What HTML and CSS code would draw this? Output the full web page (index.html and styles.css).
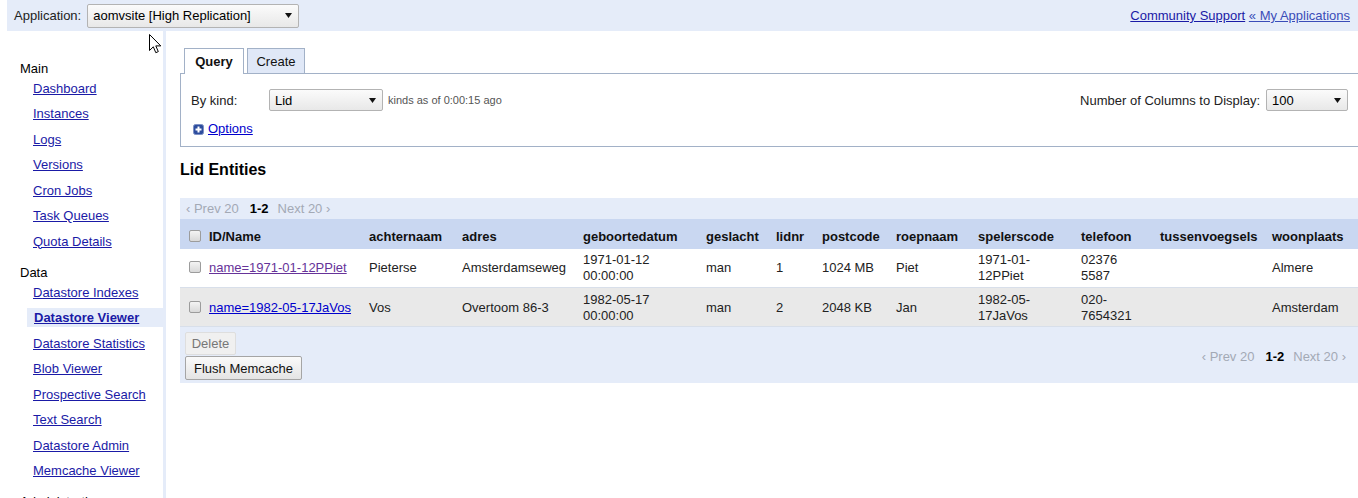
FILE: index.html
```html
<!DOCTYPE html>
<html>
<head>
<meta charset="utf-8">
<title>Datastore Viewer</title>
<link rel="stylesheet" href="styles.css">
</head>
<body>
<div class="topbar">
  <div class="app">
    <span class="app-label">Application:</span>
    <div class="select app-select"><span>aomvsite [High Replication]</span><svg class="arrow" width="7" height="5" viewBox="0 0 7 5"><path d="M0 0H7L3.5 5Z"/></svg></div>
  </div>
  <div class="toplinks"><a href="#" class="tl1">Community Support</a> <a href="#" class="tl2">« My Applications</a></div>
</div>
<div class="layout">
  <nav class="sidebar">
    <div class="sec">Main</div>
    <ul>
      <li><a href="#">Dashboard</a></li>
      <li><a href="#">Instances</a></li>
      <li><a href="#">Logs</a></li>
      <li><a href="#">Versions</a></li>
      <li><a href="#">Cron Jobs</a></li>
      <li><a href="#">Task Queues</a></li>
      <li><a href="#">Quota Details</a></li>
    </ul>
    <div class="sec">Data</div>
    <ul>
      <li><a href="#">Datastore Indexes</a></li>
      <li class="current"><a href="#">Datastore Viewer</a></li>
      <li><a href="#">Datastore Statistics</a></li>
      <li><a href="#">Blob Viewer</a></li>
      <li><a href="#">Prospective Search</a></li>
      <li><a href="#">Text Search</a></li>
      <li><a href="#">Datastore Admin</a></li>
      <li><a href="#">Memcache Viewer</a></li>
    </ul>
    <div class="sec">Administration</div>
    <ul>
      <li><a href="#">Application Settings</a></li>
    </ul>
  </nav>
  <main class="main">
    <div class="tabs">
      <span class="tab active">Query</span>
      <span class="tab create">Create</span>
    </div>
    <div class="tabbox">
      <div class="kindrow">
        <div class="kind">
          <span class="bykind">By kind:</span>
          <div class="select kind-select"><span>Lid</span><svg class="arrow" width="7" height="5" viewBox="0 0 7 5"><path d="M0 0H7L3.5 5Z"/></svg></div>
          <span class="note">kinds as of 0:00:15 ago</span>
        </div>
        <div class="cols">
          <span>Number of Columns to Display:</span>
          <div class="select cols-select"><span>100</span><svg class="arrow" width="7" height="5" viewBox="0 0 7 5"><path d="M0 0H7L3.5 5Z"/></svg></div>
        </div>
      </div>
      <div class="options">
        <svg class="plus" width="11" height="11" viewBox="0 0 11 11"><rect x="0.5" y="0.5" width="10" height="10" rx="2" fill="#2d4d9e" stroke="#7d90c4"/><path d="M5.5 2.5V8.5M2.5 5.5H8.5" stroke="#fff" stroke-width="2"/></svg>
        <a href="#">Options</a>
      </div>
    </div>

    <h2 class="title">Lid Entities</h2>

    <div class="entities">
      <div class="pager"><span class="dis">‹ Prev 20</span><b>1-2</b><span class="dis">Next 20 ›</span></div>
      <table class="grid">
        <colgroup>
          <col class="c1"><col class="c2"><col class="c3"><col class="c4"><col class="c5"><col class="c6"><col class="c7"><col class="c8"><col class="c9"><col class="c10"><col class="c11"><col class="c12">
        </colgroup>
        <thead>
          <tr>
            <th class="first"><span class="cb"></span>ID/Name</th>
            <th>achternaam</th>
            <th>adres</th>
            <th>geboortedatum</th>
            <th>geslacht</th>
            <th>lidnr</th>
            <th>postcode</th>
            <th>roepnaam</th>
            <th>spelerscode</th>
            <th>telefoon</th>
            <th>tussenvoegsels</th>
            <th>woonplaats</th>
          </tr>
        </thead>
        <tbody>
          <tr class="odd">
            <td class="first"><span class="cb"></span><a href="#" class="visited">name=1971-01-12PPiet</a></td>
            <td>Pieterse</td>
            <td>Amsterdamseweg</td>
            <td>1971-01-12 00:00:00</td>
            <td>man</td>
            <td>1</td>
            <td>1024 MB</td>
            <td>Piet</td>
            <td>1971-01-12PPiet</td>
            <td>02376 5587</td>
            <td></td>
            <td>Almere</td>
          </tr>
          <tr class="even">
            <td class="first"><span class="cb"></span><a href="#">name=1982-05-17JaVos</a></td>
            <td>Vos</td>
            <td>Overtoom 86-3</td>
            <td>1982-05-17 00:00:00</td>
            <td>man</td>
            <td>2</td>
            <td>2048 KB</td>
            <td>Jan</td>
            <td>1982-05-17JaVos</td>
            <td>020-7654321</td>
            <td></td>
            <td>Amsterdam</td>
          </tr>
        </tbody>
      </table>
      <div class="foot">
        <div class="btns">
          <button class="btn del" disabled>Delete</button>
          <button class="btn flush">Flush Memcache</button>
        </div>
        <div class="pager right"><span class="dis">‹ Prev 20</span><b>1-2</b><span class="dis">Next 20 ›</span></div>
      </div>
    </div>
  </main>
</div>
<svg class="cursor" width="13" height="21" viewBox="0 0 13 21"><path d="M0.5 0.5V16.5L4.3 12.8L6.8 18.7L9.3 17.6L6.8 11.9H11.8Z" fill="#fff" stroke="#000" stroke-width="1" stroke-linejoin="miter"/></svg>
</body>
</html>
```
FILE: styles.css
```css
html, body {
  margin: 0;
  padding: 0;
  overflow: hidden;
}
body {
  font-family: "Liberation Sans", Arial, sans-serif;
  font-size: 13px;
  color: #000;
  background: #fff;
  width: 1358px;
  height: 498px;
  position: relative;
}
a {
  color: #0000cc;
  text-decoration: underline;
}

/* top bar */
.topbar {
  margin-left: 7px;
  height: 31px;
  background: #e5ecf9;
  display: flex;
  align-items: center;
  justify-content: space-between;
  padding: 0 7px;
}
.app {
  display: flex;
  align-items: center;
  gap: 6px;
}
.app-label {
  color: #222;
}
.select {
  display: flex;
  align-items: center;
  justify-content: space-between;
  box-sizing: border-box;
  border: 1px solid #b3b3b3;
  border-radius: 2px;
  background: linear-gradient(#fbfbfb, #e8e8e8);
  padding: 0 6px 0 5px;
  color: #000;
}
.arrow path {
  fill: #111;
}
.app-select {
  width: 212px;
  height: 24px;
}
.toplinks {
  padding-right: 1px;
}
.toplinks .tl1 {
  color: #1a1aa6;
}
.toplinks .tl2 {
  color: #3a4cb8;
}

/* layout */
.layout {
  display: flex;
  height: 467px;
  overflow: hidden;
}
.sidebar {
  box-sizing: border-box;
  width: 166px;
  flex: none;
  border-right: 3px solid #e5ecf9;
  padding: 31.75px 0 0 20px;
}
.sec {
  line-height: 12.5px;
  height: 12.5px;
}
.sidebar ul {
  list-style: none;
  margin: 0 0 13px;
  padding: 0;
}
.sidebar li {
  height: 25.5px;
  display: flex;
  align-items: center;
  padding-left: 13px;
}
.sidebar li a {
  color: #1a1aa6;
}
.sidebar li.current {
  padding-left: 7px;
}
.sidebar li.current a {
  flex: 1;
  display: block;
  height: 19px;
  line-height: 19px;
  padding-left: 7px;
  background: #e5ecf9;
  font-weight: bold;
}

/* main */
.main {
  flex: 1;
  min-width: 0;
  padding: 17px 0 0 14px;
}
.tabs {
  display: flex;
  align-items: flex-start;
  gap: 3px;
  margin-left: 4px;
  height: 25px;
}
.tab {
  box-sizing: border-box;
  height: 25px;
  line-height: 25px;
  border: 1px solid #a2b1c7;
  border-bottom: none;
  text-align: center;
  background: #e0e8f7;
  color: #111;
}
.tab.active {
  width: 60px;
  height: 26px;
  background: #fff;
  font-weight: bold;
  position: relative;
  z-index: 1;
}
.tab.create {
  width: 58px;
}
.tabbox {
  border: 1px solid #a2b1c7;
  margin-right: -1px;
  padding: 15px 10px 9px 10px;
}
.kindrow {
  display: flex;
  justify-content: space-between;
  align-items: center;
  height: 22px;
}
.kind, .cols {
  display: flex;
  align-items: center;
}
.bykind {
  width: 78px;
  color: #222;
}
.kind-select {
  width: 114px;
  height: 22px;
}
.note {
  font-size: 11px;
  color: #555;
  margin-left: 5px;
}
.cols {
  gap: 6px;
  color: #222;
}
.cols-select {
  width: 82px;
  height: 22px;
}
.options {
  margin-top: 10px;
  height: 16px;
  line-height: 16px;
  display: flex;
  align-items: center;
  gap: 4px;
  padding-left: 2px;
}
.plus {
  display: block;
}

.title {
  font-size: 16px;
  line-height: 20px;
  font-weight: bold;
  margin: 12px 0 18px;
  padding-top: 1px;
}

/* entities */
.entities {
  background: #e5ecf9;
}
.pager {
  height: 21px;
  line-height: 21px;
  padding-left: 6px;
  white-space: nowrap;
}
.pager .dis {
  color: #a3a9b5;
}
.pager b {
  color: #000;
  margin: 0 9px 0 11px;
}
.grid {
  width: 100%;
  table-layout: fixed;
  border-collapse: separate;
  border-spacing: 0;
}
.c1 { width: 181px; }
.c2 { width: 93px; }
.c3 { width: 121px; }
.c4 { width: 123px; }
.c5 { width: 70px; }
.c6 { width: 46px; }
.c7 { width: 74px; }
.c8 { width: 82px; }
.c9 { width: 103px; }
.c10 { width: 79px; }
.c11 { width: 112px; }
.c12 { width: 94px; }
.grid th {
  height: 26px;
  padding: 4px 4px 0 8px;
  text-align: left;
  font-weight: bold;
  background: #c9d7f1;
  white-space: nowrap;
  color: #111;
}
.grid td {
  padding: 3px 4px 3px 8px;
  line-height: 16px;
  height: 32px;
  vertical-align: middle;
  border-bottom: 1px solid #d8dfea;
  color: #222;
}
.grid .first {
  padding-left: 9px;
  white-space: nowrap;
}
.grid tr.odd td {
  background: #fff;
}
.grid tr.even td {
  background: #e9e9e9;
  padding-top: 4px;
  padding-bottom: 2px;
}
.grid a.visited {
  color: #663399;
}
.cb {
  display: inline-block;
  box-sizing: border-box;
  width: 12px;
  height: 12px;
  border: 1px solid #9c9c9c;
  border-radius: 2px;
  background: linear-gradient(#f4f4f4, #d9d9d9);
  vertical-align: -1px;
  margin-right: 8px;
}
.foot {
  display: flex;
  justify-content: space-between;
  align-items: center;
  padding: 5px 0 3px 5px;
}
.btns {
  display: flex;
  flex-direction: column;
  align-items: flex-start;
}
.btn {
  display: block;
  box-sizing: border-box;
  margin: 0;
  padding: 0;
  font-family: "Liberation Sans", Arial, sans-serif;
  font-size: 13px;
  border-radius: 2px;
  text-align: center;
}
.btn.del {
  width: 51px;
  height: 23px;
  border: 1px solid #dedede;
  background: #f0f0f0;
  color: #777;
}
.btn.flush {
  width: 117px;
  height: 24px;
  margin-top: 1px;
  border: 1px solid #a5a5a5;
  background: linear-gradient(#fafafa, #e4e4e4);
  color: #111;
}
.pager.right {
  padding: 0 12px 0 0;
}

.cursor {
  position: absolute;
  left: 149px;
  top: 34px;
}
```
